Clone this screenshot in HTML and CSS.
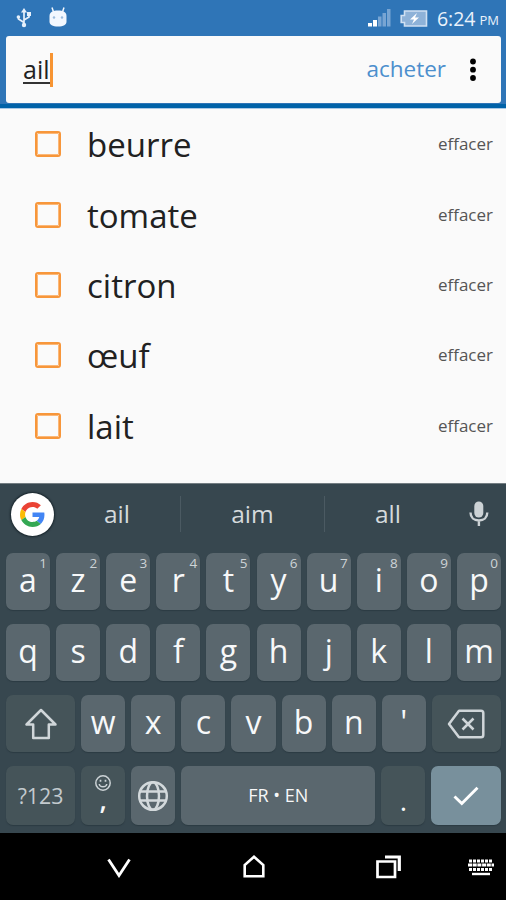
FILE: index.html
```html
<!DOCTYPE html>
<html lang="fr">
<head>
<meta charset="utf-8">
<title>Courses</title>
<link rel="stylesheet" href="styles.css">
</head>
<body>
<div class="phone">
  <header class="top">
    <div class="status">
      <svg class="usb" width="16" height="20" viewBox="0 0 16 20" fill="none" stroke="#e6f0fb" stroke-width="1.700"><path d="M8 4v13M8 14.500L2.500 11V8.500M8 12l5-3V5"/><path d="M8 0l3 4.500H5z" fill="#e6f0fb" stroke="none"/><circle cx="8" cy="17" r="2.200" fill="#e6f0fb" stroke="none"/><circle cx="2.400" cy="9" r="1.800" fill="#e6f0fb" stroke="none"/><path d="M11 4h4v4h-4z" fill="#e6f0fb" stroke="none"/></svg>
      <svg class="droid" width="20" height="20" viewBox="0 0 20 20"><path d="M5.500 5L4 0.500M14.500 5L16 .5" stroke="#f3f8ff" stroke-width="1.500"/><path d="M1.500 9C1.500 5 5 3.500 10 3.500S18.500 5 18.500 9v5.500c0 3.500-3 5-8.500 5s-8.500-1.500-8.500-5z" fill="#f3f8ff"/><circle cx="6" cy="10.500" r="1.200" fill="#9bbcdd"/><circle cx="14" cy="10.500" r="1.200" fill="#9bbcdd"/></svg>
      <span class="grow"></span>
      <svg class="signal" width="23" height="18" viewBox="0 0 23 18"><path d="M0 14h4v3.500H0zM5 11h4v6.500H5z" fill="#fff"/><path d="M10 7.500h3.500v10H10zM14.500 4H18v13.500h-3.500zM19 0h3.500v17.500H19z" fill="#78a5d3"/></svg>
      <svg class="battery" width="28" height="17" viewBox="0 0 28 17"><path d="M4.500 1h22v15h-22v-3.500H1.200v-7h3.300z" fill="#8eb2d8" stroke="#cfe0f2" stroke-width="1.600"/><path d="M17 3l-7 6.500h4L12 14l7-6.500h-4z" fill="#fff"/></svg>
      <span class="time">6:24</span><span class="pm">PM</span>
    </div>
    <div class="search">
      <span class="query">ail</span><span class="caret"></span>
      <span class="grow"></span>
      <span class="buy">acheter</span>
      <svg class="more" width="8" height="24" viewBox="0 0 8 24"><circle cx="4" cy="3.500" r="2.900"/><circle cx="4" cy="11.700" r="2.900"/><circle cx="4" cy="20" r="2.900"/></svg>
    </div>
  </header>
  <main class="list">
    <div class="item"><span class="box"></span><span class="name">beurre</span><span class="del">effacer</span></div>
    <div class="item"><span class="box"></span><span class="name">tomate</span><span class="del">effacer</span></div>
    <div class="item"><span class="box"></span><span class="name">citron</span><span class="del">effacer</span></div>
    <div class="item"><span class="box"></span><span class="name">œuf</span><span class="del">effacer</span></div>
    <div class="item"><span class="box"></span><span class="name">lait</span><span class="del">effacer</span></div>
  </main>
  <section class="keyboard">
    <div class="suggest">
      <span class="google"><svg width="25" height="25" viewBox="0 0 48 48"><path fill="#ea4335" d="M24 9.500c3.540 0 6.710 1.220 9.210 3.600l6.850-6.850C35.900 2.380 30.470 0 24 0 14.620 0 6.510 5.380 2.560 13.220l7.980 6.190C12.430 13.720 17.740 9.500 24 9.500z"/><path fill="#4285f4" d="M46.980 24.550c0-1.570-.15-3.090-.38-4.550H24v9.020h12.940c-.58 2.960-2.260 5.480-4.780 7.180l7.730 6c4.510-4.180 7.090-10.360 7.090-17.650z"/><path fill="#fbbc05" d="M10.530 28.590c-.48-1.450-.76-2.990-.76-4.590s.27-3.140.76-4.590l-7.980-6.190C.92 16.460 0 20.120 0 24c0 3.880.92 7.540 2.560 10.780z"/><path fill="#34a853" d="M24 48c6.480 0 11.930-2.130 15.890-5.810l-7.730-6c-2.150 1.450-4.920 2.300-8.160 2.300-6.260 0-11.570-4.220-13.470-9.910l-7.980 6.190C6.510 42.620 14.620 48 24 48z"/></svg></span>
      <span class="word first">ail</span><span class="word">aim</span><span class="word last">all</span>
      <svg class="mic" width="20" height="26" viewBox="0 0 20 26"><rect x="5.300" y="0.500" width="9" height="16" rx="4.500" fill="#ccd2d5"/><path d="M1.500 11.500c0 5 3.500 8 8.400 8s8.400-3 8.400-8M9.900 19.500V25" fill="none" stroke="#ccd2d5" stroke-width="2.400"/></svg>
    </div>
    <div class="row ten">
      <span class="key">a<sup>1</sup></span><span class="key">z<sup>2</sup></span><span class="key">e<sup>3</sup></span><span class="key">r<sup>4</sup></span><span class="key">t<sup>5</sup></span><span class="key">y<sup>6</sup></span><span class="key">u<sup>7</sup></span><span class="key">i<sup>8</sup></span><span class="key">o<sup>9</sup></span><span class="key">p<sup>0</sup></span>
    </div>
    <div class="row ten">
      <span class="key">q</span><span class="key">s</span><span class="key">d</span><span class="key">f</span><span class="key">g</span><span class="key">h</span><span class="key">j</span><span class="key">k</span><span class="key">l</span><span class="key">m</span>
    </div>
    <div class="row third">
      <span class="key dark"><svg width="34" height="32" viewBox="0 0 34 32" fill="none" stroke="#d0d6d9" stroke-width="2.500" stroke-linejoin="round"><path d="M17 2L2.500 16.500h6.700V30h15.600V16.500h6.700z"/></svg></span>
      <span class="key">w</span><span class="key">x</span><span class="key">c</span><span class="key">v</span><span class="key">b</span><span class="key">n</span><span class="key">'</span>
      <span class="key dark"><svg width="38" height="30" viewBox="0 0 38 30" fill="none" stroke="#d0d6d9" stroke-width="2.500" stroke-linejoin="round"><path d="M12 1.800h22q2.300 0 2.300 2.300v21.800q0 2.300-2.300 2.300H12L2 15z"/><path d="M15.500 9.500l11 11M26.500 9.500l-11 11"/></svg></span>
    </div>
    <div class="row fourth">
      <span class="key dark num">?123</span>
      <span class="key dark comma"><svg width="16" height="16" viewBox="0 0 16 16" fill="none" stroke="#ccd3d6" stroke-width="1.500"><circle cx="8" cy="8" r="7.200"/><path d="M4.200 9c.6 3.800 7 3.800 7.600 0"/><path d="M5.500 4.800v2M10.500 4.800v2" stroke-width="1.700"/></svg><span>,</span></span>
      <span class="key"><svg width="32" height="32" viewBox="0 0 32 32" fill="none" stroke="#d3d9dc" stroke-width="2.500"><circle cx="16" cy="16" r="13.800"/><ellipse cx="16" cy="16" rx="6" ry="13.800"/><path d="M3 11.500h26M3 20.500h26"/></svg></span>
      <span class="key space">FR • EN</span>
      <span class="key dark dot">.</span>
      <span class="key enter"><svg width="26" height="20" viewBox="0 0 26 20" fill="none" stroke="#fff" stroke-width="2.900"><path d="M1.500 10.500l7.300 7L24.500 1.800"/></svg></span>
    </div>
  </section>
  <nav class="nav">
    <svg class="down" width="24" height="20" viewBox="0 0 24 20" fill="none" stroke="#fff" stroke-width="2.800"><path d="M1.500 1.500L12 17.500 22.500 1.500"/></svg>
    <svg class="home" width="22" height="23" viewBox="0 0 22 23" fill="none" stroke="#fff" stroke-width="2.600"><path d="M1.700 21.300V10L11 1.800 20.300 10v11.300z"/></svg>
    <svg class="recent" width="25" height="24" viewBox="0 0 25 24" fill="none" stroke="#fff" stroke-width="2.700"><path d="M1.500 6.500h17.500v15.500H1.500z"/><path d="M9 2h14.300v14" stroke-width="3.200"/></svg>
    <svg class="kbd" width="26" height="18" viewBox="0 0 26 18" fill="none" stroke="#fff"><path d="M1 3h24M1 11.500h24" stroke-width="3.200" stroke-dasharray="3 1"/><path d="M0 7h26" stroke-width="2.800" stroke-dasharray="4 .7"/><path d="M4 16h18" stroke-width="2.400"/></svg>
  </nav>
</div>
</body>
</html>
```
FILE: styles.css
```css
* { box-sizing: border-box; }
body {
  margin: 0;
  font-family: "Open Sans", "Noto Sans", sans-serif;
  background: #fafafa;
}
svg { display: block; flex: none; }
.phone {
  width: 506px;
  height: 900px;
  display: flex;
  flex-direction: column;
  overflow: hidden;
}
.grow { flex: 1; }

.top {
  height: 109px;
  padding: 0 5px 0 6px;
  background: #2f75b7;
  border-bottom: 1px solid #a9c8e5;
  box-shadow: inset 0 -4px 0 #0062a8;
}
.status {
  height: 36px;
  display: flex;
  align-items: center;
  padding: 0 2px 0 10px;
  color: #eaf2fb;
}
.droid { margin: -2px 0 0 16px; }
.signal { margin-right: 9px; }
.battery { margin-right: 9px; }
.time { font-size: 19.5px; }
.pm { font-size: 13px; margin: 4px 0 0 4px; }
.search {
  height: 67px;
  display: flex;
  align-items: center;
  padding: 0 24px 0 17px;
  background: #fafafa;
  border-radius: 3px;
}
.query {
  font-size: 25px;
  line-height: 26px;
  color: #222;
  border-bottom: 2px solid #333;
}
.caret { width: 3px; height: 34px; background: #f79432; }
.buy { font-size: 22.5px; color: #4c8fcd; margin-right: 23px; padding-bottom: 3px; }

.list { height: 374px; }
.item {
  height: 70.4px;
  display: flex;
  align-items: center;
  padding: 0 13px 0 35px;
}
.box {
  width: 26px;
  height: 26px;
  border: 2.5px solid #f7963a;
  outline: .5px solid #fbb777;
  outline-offset: -3px;
  border-radius: 3px;
}
.name { flex: 1; margin-left: 26px; padding-top: 1px; font-size: 33px; color: #212121; }
.del { font-size: 17px; color: #555; padding-bottom: 1px; }

.keyboard {
  height: 350px;
  padding: 1px 5px 0 6px;
  background: #37474f;
  border-top: 1px solid #737d82;
}
.suggest {
  height: 68px;
  display: flex;
  align-items: center;
  padding-bottom: 10px;
}
.google {
  width: 43px;
  height: 43px;
  margin-left: 5px;
  border-radius: 50%;
  background: #fff;
  box-shadow: 0 0 2px 1px #17242b;
  display: grid;
  place-items: center;
}
.word {
  width: 144px;
  height: 36px;
  line-height: 35px;
  text-align: center;
  font-size: 24.5px;
  color: #d5dadc;
  border-right: 1px solid #4b5a62;
}
.word.first { width: 127px; }
.word.last { width: 126px; border: 0; }
.mic { margin-left: 18px; }

.row { display: grid; gap: 6.1px; height: 57px; margin-bottom: 14px; }
.ten { grid-template-columns: repeat(10, 1fr); }
.third { grid-template-columns: 69px repeat(7, 1fr) 69px; }
.fourth { grid-template-columns: 69px 44px 44px 194px 44px 1fr; height: 59px; }
.key {
  position: relative;
  display: flex;
  align-items: center;
  justify-content: center;
  padding-bottom: 3px;
  font-size: 32px;
  line-height: 1;
  color: #f7f8f9;
  background: #5a676e;
  border-radius: 7px;
  box-shadow: 0 1px 1px #2c3b43;
}
.key.dark { background: #455459; }
.key svg { margin-top: 3px; }
.key sup {
  position: absolute;
  top: 3px;
  right: 3px;
  font-size: 13.5px;
  line-height: 15px;
  color: #ced4d7;
}
.key.num { font-size: 21.3px; color: #c3cace; padding: 0; }
.key.comma { flex-direction: column; justify-content: flex-start; padding-top: 6px; font-size: 27px; font-weight: 600; }
.key.comma span { margin-top: -6px; }
.key.space { font-size: 18px; padding: 0 0 1px; }
.key.dot { font-size: 28px; padding: 9px 0 0; }
.key.enter { background: #78909c; }

.nav {
  flex: 1;
  display: flex;
  align-items: center;
  padding: 0 12px 0 107px;
  background: #000;
}
.down { margin-top: 2px; }
.home { margin-left: 112px; }
.recent { margin-left: 111px; }
.kbd { margin-left: auto; }
```
